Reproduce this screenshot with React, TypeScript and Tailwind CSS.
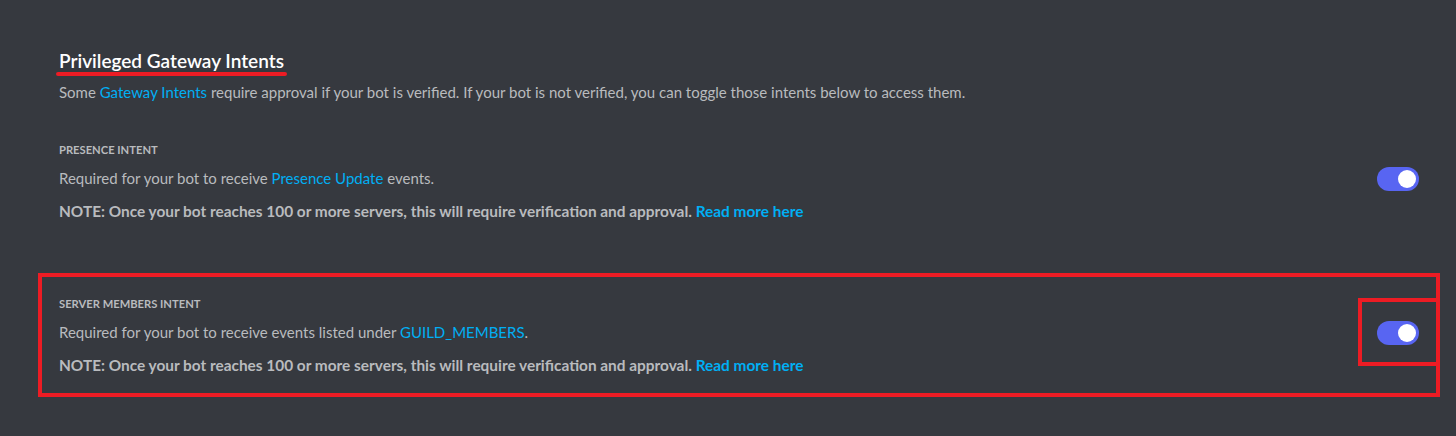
import { ReactNode } from "react";

const Toggle = () => {
  return (
    <div className="mb-[6px] flex h-[24px] w-[42px] shrink-0 items-center justify-end rounded-full bg-[#5865f2] pr-[3px]">
      <div className="h-[18px] w-[18px] rounded-full bg-white" />
    </div>
  );
};

const Link = ({ children, bold }: { children: ReactNode; bold?: boolean }) => (
  <span className={bold ? "font-bold text-[#00aff4]" : "text-[#00aff4]"}>{children}</span>
);

type IntentProps = {
  label: string;
  body: ReactNode;
  marked?: boolean;
};

const Intent = ({ label, body, marked }: IntentProps) => {
  return (
    <div
      className={
        marked
          ? "relative flex items-center border-4 border-[#ed1c24] px-[17px] pt-[19px] pb-[18px]"
          : "relative flex items-center border-4 border-transparent px-[17px] pt-[19px] pb-[18px]"
      }
    >
      <div className="flex flex-1 flex-col">
        <div className="text-[11.2px] leading-[16px] font-bold uppercase text-[#b9bbbe]">{label}</div>
        <div className="mt-[10px] text-[15px] leading-[20px] text-[#b9bbbe]">{body}</div>
        <div className="mt-[13px] text-[15.4px] leading-[20px] font-bold text-[#b9bbbe]">
          NOTE: Once your bot reaches 100 or more servers, this will require verification and approval.{" "}
          <Link bold>Read more here</Link>
        </div>
      </div>
      <Toggle />
      {marked && (
        <div className="absolute top-[21px] right-[-4px] h-[68px] w-[82px] border-4 border-[#ed1c24]" />
      )}
    </div>
  );
};

const App = () => {
  return (
    <div className="h-[436px] w-full overflow-hidden bg-[#36393f] font-['Lato','Liberation_Sans',sans-serif]">
      <div className="pt-[49px] pr-[16px] pl-[38px]">
        <div className="px-[21px]">
          <div className="inline-flex flex-col">
            <h2 className="text-[19px] leading-[24px] font-semibold text-white">Privileged Gateway Intents</h2>
            <div className="-mx-[3px] -mt-px h-[4px] rounded-full bg-[#ed1c24]" />
          </div>
          <p className="mt-[6px] text-[15px] leading-[20px] text-[#b9bbbe]">
            Some <Link>Gateway Intents</Link> require approval if your bot is verified. If your bot is not
            verified, you can toggle those intents below to access them.
          </p>
        </div>

        <div className="mt-[17px] flex flex-col gap-[30px]">
          <Intent
            label="Presence Intent"
            body={
              <>
                Required for your bot to receive <Link>Presence Update</Link> events.
              </>
            }
          />
          <Intent
            marked
            label="Server Members Intent"
            body={
              <>
                Required for your bot to receive events listed under <Link>GUILD_MEMBERS</Link>.
              </>
            }
          />
        </div>
      </div>
    </div>
  );
};

export default App;
